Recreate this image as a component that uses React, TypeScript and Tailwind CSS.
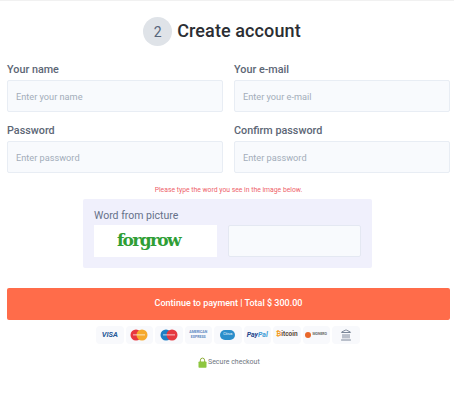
import React from 'react';
import { Landmark } from 'lucide-react';

const fields = [
  { label: 'Your name', placeholder: 'Enter your name' },
  { label: 'Your e-mail', placeholder: 'Enter your e-mail' },
  { label: 'Password', placeholder: 'Enter password' },
  { label: 'Confirm password', placeholder: 'Enter password' },
];

const Chip = ({ children }: { children: React.ReactNode }) => (
  <div className="flex h-[18px] w-[27.5px] items-center justify-center overflow-hidden rounded-sm bg-[#f8f9fc]">
    {children}
  </div>
);

const Circles = ({ a, b }: { a: string; b: string }) => (
  <svg width="18" height="12" viewBox="0 0 18 12">
    <circle cx="6" cy="6" r="5.5" fill={a} />
    <circle cx="12" cy="6" r="5.5" fill={b} />
    <rect x="3" y="5" width="12" height="1.6" fill="#ffffff" opacity="0.45" />
  </svg>
);

export default function App() {
  return (
    <div className="h-[400px] w-[454px] overflow-hidden border-t border-[#f1f1f1] bg-white pl-[7px] pr-[4px] font-['Roboto',sans-serif]">
      <div className="flex h-[63px] items-center justify-center pr-[13px] pb-[3px]">
        <div className="flex h-[29px] w-[29px] items-center justify-center rounded-full bg-[#dfe3e8] pt-[2px] text-[14px] text-[#56657a]">
          2
        </div>
        <h1 className="ml-[5px] text-[18px] leading-none font-medium tracking-[0.1px] text-[#2b2e33]">
          Create account
        </h1>
      </div>

      <div className="grid grid-cols-[216px_216px] gap-x-[11px] gap-y-[13px]">
        {fields.map((f) => (
          <div key={f.label} className="flex flex-col">
            <label className="mb-[4px] h-[12px] text-[10.8px] leading-[12px] font-medium text-[#5c6675]">{f.label}</label>
            <input
              placeholder={f.placeholder}
              className="h-[32px] rounded-[2px] border border-[#e8edf4] bg-[#f8fafd] px-[8px] text-[9.2px] outline-none placeholder:text-[#a3adba]"
            />
          </div>
        ))}
      </div>

      <p className="mt-[13px] text-center text-[6.8px] leading-[9px] text-[#ee5f6b]">
        Please type the word you see in the image below.
      </p>

      <div className="mt-[4px] ml-[76px] h-[69px] w-[289px] rounded-[2px] bg-[#f0f0fc] px-[11px] pt-[11px]">
        <div className="h-[12px] text-[10.5px] leading-[12px] text-[#667089]">Word from picture</div>
        <div className="mt-[3px] flex gap-[11px]">
          <div className="flex h-[32px] w-[123px] items-center justify-center bg-white pr-[14px] font-['DejaVu_Serif',serif] text-[17px] font-bold tracking-[-1.6px] text-[#2f9e35]">
            forgrow
          </div>
          <input className="h-[32px] w-[133px] rounded-[2px] border border-[#e4e8f2] bg-[#f8fafd] outline-none" />
        </div>
      </div>

      <button className="mt-[20px] h-[32px] w-[443px] rounded-[2px] bg-[#ff6c4a] text-[9px] font-medium text-white">
        Continue to payment | Total $ 300.00
      </button>

      <div className="mt-[6px] ml-[89px] flex gap-[2px]">
        <Chip>
          <span className="text-[7.5px] font-bold text-[#2a5b99] italic">VISA</span>
        </Chip>
        <Chip>
          <Circles a="#e8383f" b="#f6a92b" />
        </Chip>
        <Chip>
          <Circles a="#1f7fc4" b="#e5383f" />
        </Chip>
        <Chip>
          <span className="text-center text-[3.5px] leading-[5px] font-bold text-[#5a86c0]">
            AMERICAN
            <br />
            EXPRESS
          </span>
        </Chip>
        <Chip>
          <div className="flex h-[10px] w-[15px] items-center justify-center rounded-[5px] bg-[#2b8ecb] text-[3.5px] text-white">
            Citrus
          </div>
        </Chip>
        <Chip>
          <span className="text-[7px] font-bold text-[#23428a] italic">
            Pay<span className="text-[#3d9bd6]">Pal</span>
          </span>
        </Chip>
        <Chip>
          <span className="text-[6.5px] font-bold text-[#5b4a3a]">
            <span className="text-[#f39a22]">₿</span>itcoin
          </span>
        </Chip>
        <Chip>
          <span className="flex items-center gap-[1px] text-[3.5px] font-bold text-[#6b6b6b]">
            <span className="h-[6px] w-[6px] rounded-full bg-[#e8672a]" />
            MONERO
          </span>
        </Chip>
        <Chip>
          <Landmark size={12} strokeWidth={1.6} className="text-[#5c6b80]" />
        </Chip>
      </div>

      <div className="mt-[13px] ml-[191px] flex items-center gap-[1px]">
        <svg width="9" height="11" viewBox="0 0 9 11">
          <path d="M2.4 5V3.2a2.1 2.1 0 0 1 4.2 0V5" fill="none" stroke="#8fae3a" strokeWidth="1" />
          <rect x="0.5" y="4.5" width="8" height="6.2" rx="0.8" fill="#8dc63f" />
        </svg>
        <span className="text-[7px] leading-[11px] text-[#6f7680]">Secure checkout</span>
      </div>
    </div>
  );
}
